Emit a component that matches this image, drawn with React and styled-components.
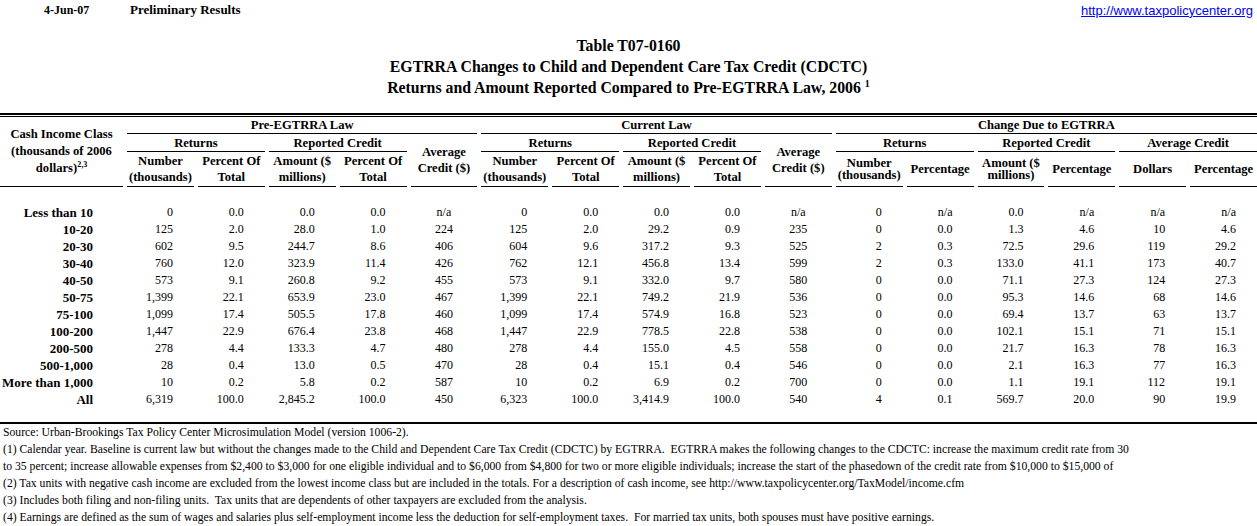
import React from "react";
import styled, { createGlobalStyle } from "styled-components";

const GlobalStyle = createGlobalStyle`
  body {
    margin: 0;
    background: #fff;
    color: #000;
    font-family: "Liberation Serif", "Times New Roman", serif;
  }
`;

const rows = [
  ["Less than 10", "0", "0.0", "0.0", "0.0", "n/a", "0", "0.0", "0.0", "0.0", "n/a", "0", "n/a", "0.0", "n/a", "n/a", "n/a"],
  ["10-20", "125", "2.0", "28.0", "1.0", "224", "125", "2.0", "29.2", "0.9", "235", "0", "0.0", "1.3", "4.6", "10", "4.6"],
  ["20-30", "602", "9.5", "244.7", "8.6", "406", "604", "9.6", "317.2", "9.3", "525", "2", "0.3", "72.5", "29.6", "119", "29.2"],
  ["30-40", "760", "12.0", "323.9", "11.4", "426", "762", "12.1", "456.8", "13.4", "599", "2", "0.3", "133.0", "41.1", "173", "40.7"],
  ["40-50", "573", "9.1", "260.8", "9.2", "455", "573", "9.1", "332.0", "9.7", "580", "0", "0.0", "71.1", "27.3", "124", "27.3"],
  ["50-75", "1,399", "22.1", "653.9", "23.0", "467", "1,399", "22.1", "749.2", "21.9", "536", "0", "0.0", "95.3", "14.6", "68", "14.6"],
  ["75-100", "1,099", "17.4", "505.5", "17.8", "460", "1,099", "17.4", "574.9", "16.8", "523", "0", "0.0", "69.4", "13.7", "63", "13.7"],
  ["100-200", "1,447", "22.9", "676.4", "23.8", "468", "1,447", "22.9", "778.5", "22.8", "538", "0", "0.0", "102.1", "15.1", "71", "15.1"],
  ["200-500", "278", "4.4", "133.3", "4.7", "480", "278", "4.4", "155.0", "4.5", "558", "0", "0.0", "21.7", "16.3", "78", "16.3"],
  ["500-1,000", "28", "0.4", "13.0", "0.5", "470", "28", "0.4", "15.1", "0.4", "546", "0", "0.0", "2.1", "16.3", "77", "16.3"],
  ["More than 1,000", "10", "0.2", "5.8", "0.2", "587", "10", "0.2", "6.9", "0.2", "700", "0", "0.0", "1.1", "19.1", "112", "19.1"],
  ["All", "6,319", "100.0", "2,845.2", "100.0", "450", "6,323", "100.0", "3,414.9", "100.0", "540", "4", "0.1", "569.7", "20.0", "90", "19.9"],
];

// average credit columns are centred, the rest right aligned
const centred = [5, 10];

const notes = [
  "Source: Urban-Brookings Tax Policy Center Microsimulation Model (version 1006-2).",
  "(1) Calendar year. Baseline is current law but without the changes made to the Child and Dependent Care Tax Credit (CDCTC) by EGTRRA.  EGTRRA makes the following changes to the CDCTC: increase the maximum credit rate from 30",
  "to 35 percent; increase allowable expenses from $2,400 to $3,000 for one eligible individual and to $6,000 from $4,800 for two or more eligible individuals; increase the start of the phasedown of the credit rate from $10,000 to $15,000 of",
  "(2) Tax units with negative cash income are excluded from the lowest income class but are included in the totals. For a description of cash income, see http://www.taxpolicycenter.org/TaxModel/income.cfm",
  "(3) Includes both filing and non-filing units.  Tax units that are dependents of other taxpayers are excluded from the analysis.",
  "(4) Earnings are defined as the sum of wages and salaries plus self-employment income less the deduction for self-employment taxes.  For married tax units, both spouses must have positive earnings.",
];

const App = () => {
  return (
    <Page>
      <GlobalStyle />
      <TopBar>
        <DateLabel>4-Jun-07</DateLabel>
        <Status>Preliminary Results</Status>
        <SiteLink href="#">http://www.taxpolicycenter.org</SiteLink>
      </TopBar>
      <Title>
        <div>Table T07-0160</div>
        <div>EGTRRA Changes to Child and Dependent Care Tax Credit (CDCTC)</div>
        <div>
          Returns and Amount Reported Compared to Pre-EGTRRA Law, 2006 <Sup>1</Sup>
        </div>
      </Title>
      <TopRule />
      <Head>
        <HCell $col={1} $row={1} $rows={3} $lh={17}>
          <div>Cash Income Class</div>
          <div>(thousands of 2006</div>
          <div>
            dollars)<SmallSup>2,3</SmallSup>
          </div>
        </HCell>

        <HCell $col={2} $span={5} $row={1}>Pre-EGTRRA Law</HCell>
        <HCell $col={2} $span={2} $row={2}>Returns</HCell>
        <HCell $col={4} $span={2} $row={2}>Reported Credit</HCell>
        <HCell $col={6} $row={2} $rows={2}>
          <div>Average</div>
          <div>Credit ($)</div>
        </HCell>
        <HCell $col={2} $row={3}><div>Number</div><div>(thousands)</div></HCell>
        <HCell $col={3} $row={3}><div>Percent Of</div><div>Total</div></HCell>
        <HCell $col={4} $row={3}><div>Amount ($</div><div>millions)</div></HCell>
        <HCell $col={5} $row={3}><div>Percent Of</div><div>Total</div></HCell>

        <HCell $col={7} $span={5} $row={1}>Current Law</HCell>
        <HCell $col={7} $span={2} $row={2}>Returns</HCell>
        <HCell $col={9} $span={2} $row={2}>Reported Credit</HCell>
        <HCell $col={11} $row={2} $rows={2}>
          <div>Average</div>
          <div>Credit ($)</div>
        </HCell>
        <HCell $col={7} $row={3}><div>Number</div><div>(thousands)</div></HCell>
        <HCell $col={8} $row={3}><div>Percent Of</div><div>Total</div></HCell>
        <HCell $col={9} $row={3}><div>Amount ($</div><div>millions)</div></HCell>
        <HCell $col={10} $row={3}><div>Percent Of</div><div>Total</div></HCell>

        <HCell $col={12} $span={6} $row={1}>Change Due to EGTRRA</HCell>
        <HCell $col={12} $span={2} $row={2}>Returns</HCell>
        <HCell $col={14} $span={2} $row={2}>Reported Credit</HCell>
        <HCell $col={16} $span={2} $row={2}>Average Credit</HCell>
        <HCell $col={12} $row={3} $lh={12}><div>Number</div><div>(thousands)</div></HCell>
        <HCell $col={13} $row={3}>Percentage</HCell>
        <HCell $col={14} $row={3} $lh={12}><div>Amount ($</div><div>millions)</div></HCell>
        <HCell $col={15} $row={3}>Percentage</HCell>
        <HCell $col={16} $row={3}>Dollars</HCell>
        <HCell $col={17} $row={3}>Percentage</HCell>
      </Head>

      <Body>
        {rows.map((r) => (
          <Row key={r[0]}>
            <Label>{r[0]}</Label>
            {r.slice(1).map((v, i) => (
              <Num key={i} $center={centred.includes(i + 1)}>
                {v}
              </Num>
            ))}
          </Row>
        ))}
      </Body>

      <Notes>
        {notes.map((n, i) => (
          <Note key={i}>{n}</Note>
        ))}
      </Notes>
    </Page>
  );
};

export default App;

const Page = styled.div`
    width: 1257px;
    overflow: hidden;
`;

const TopBar = styled.div`
    display: flex;
    align-items: center;
    height: 20px;
    padding: 0 4px 0 44px;
    font-size: 12px;
    font-weight: bold;
`;

const DateLabel = styled.span`
    width: 86px;
`;

const Status = styled.span`
    flex: 1;
    font-size: 13px;
`;

const SiteLink = styled.a`
    font-family: "Liberation Sans", Arial, sans-serif;
    font-weight: normal;
    font-size: 13px;
    color: #0000ff;
    text-decoration: underline;
`;

const Title = styled.div`
    margin-top: 15px;
    text-align: center;
    font-weight: bold;
    font-size: 15.8px;
    line-height: 21px;
`;

const Sup = styled.sup`
    font-size: 10px;
    line-height: 0;
    vertical-align: 6px;
`;

const SmallSup = styled.sup`
    font-size: 8px;
    line-height: 0;
    vertical-align: 5px;
`;

const TopRule = styled.div`
    margin-top: 15px;
    height: 1px;
    border-top: 2px solid #000;
    border-bottom: 1px solid #000;
`;

const Grid = styled.div`
    display: grid;
    grid-template-columns: 123px repeat(16, 1fr);
    column-gap: 4px;
`;

const Head = styled(Grid)`
    grid-template-rows: 17px 18px 35px;
    font-size: 12.6px;
    font-weight: bold;
`;

const HCell = styled.div`
    grid-column: ${(p) => p.$col} / span ${(p) => p.$span || 1};
    grid-row: ${(p) => p.$row} / span ${(p) => p.$rows || 1};
    display: flex;
    flex-direction: column;
    justify-content: center;
    align-items: center;
    text-align: center;
    white-space: nowrap;
    line-height: ${(p) => p.$lh || 16}px;
    border-bottom: 1px solid #000;
`;

const Body = styled.div`
    padding: 17px 0 14px;
    border-bottom: 2px solid #000;
`;

const Row = styled(Grid)`
    height: 17px;
    line-height: 17px;
    font-size: 12px;
`;

const Label = styled.div`
    font-weight: bold;
    font-size: 13px;
    text-align: right;
    padding-right: 30px;
    white-space: nowrap;
`;

const Num = styled.div`
    text-align: ${(p) => (p.$center ? "center" : "right")};
    padding-right: ${(p) => (p.$center ? 0 : 21)}px;
    white-space: nowrap;
`;

const Notes = styled.div`
    padding-left: 3px;
    font-size: 11.7px;
    line-height: 17px;
`;

const Note = styled.div`
    white-space: pre;
`;
